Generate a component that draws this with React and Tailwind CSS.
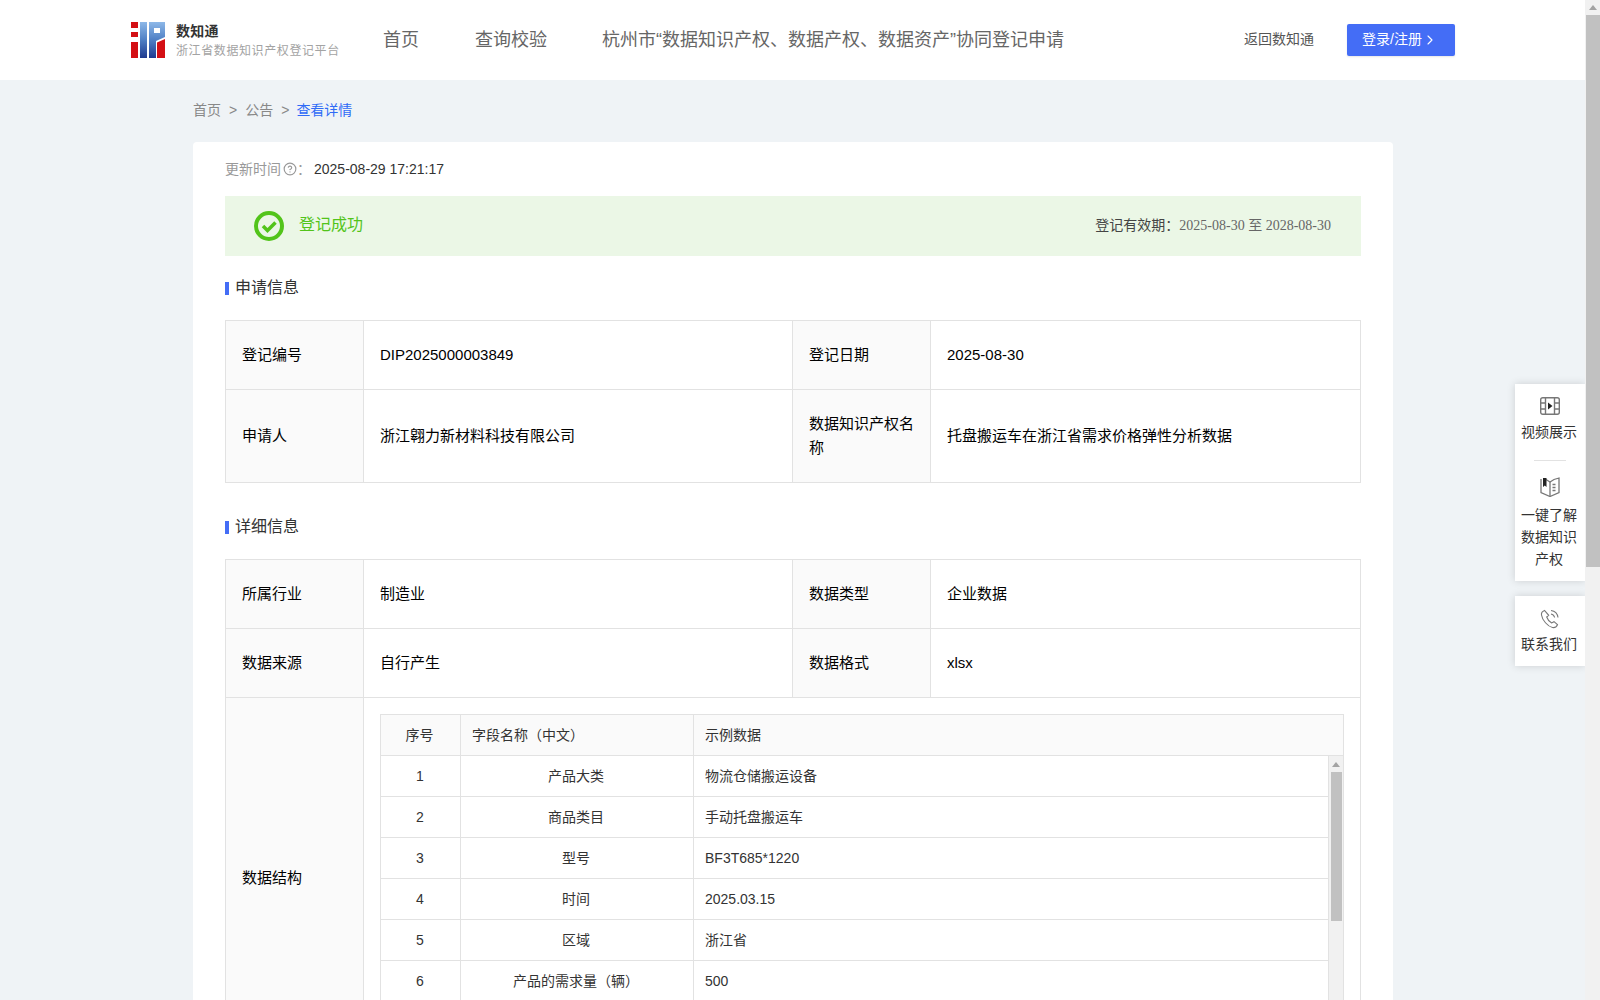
import React from 'react';
import { ChevronRight, CircleHelp } from 'lucide-react';

const FONT = "font-['Liberation_Sans','Noto_Sans_CJK_SC',sans-serif]";

const FIELDS = [
  ['1', '产品大类', '物流仓储搬运设备'],
  ['2', '商品类目', '手动托盘搬运车'],
  ['3', '型号', 'BF3T685*1220'],
  ['4', '时间', '2025.03.15'],
  ['5', '区域', '浙江省'],
  ['6', '产品的需求量（辆）', '500'],
];

// Logo, drawn since there is no image file
const Logo = () => (
  <svg width="34" height="36" viewBox="0 0 34 36" className="shrink-0">
    <defs>
      <linearGradient id="logoBlue" x1="0" y1="0" x2="0" y2="36" gradientUnits="userSpaceOnUse">
        <stop offset="0" stopColor="#8db8e8" />
        <stop offset="0.5" stopColor="#4f7fc4" />
        <stop offset="1" stopColor="#1f3a8f" />
      </linearGradient>
    </defs>
    <rect x="0" y="0" width="7" height="6" fill="#d40f14" />
    <rect x="0" y="10" width="7" height="5" fill="#d40f14" />
    <rect x="0" y="20" width="7" height="16" fill="#d40f14" />
    <rect x="9" y="0" width="7" height="36" fill="url(#logoBlue)" />
    <path d="M18 0h16v15l-9 4v17h-7z" fill="url(#logoBlue)" />
    <rect x="23" y="6" width="6" height="5" fill="#fff" />
    <path d="M26 20.500l8-3.500v19h-8z" fill="#d40f14" />
  </svg>
);

const SectionTitle = ({ children }) => (
  <div className="flex items-center h-[26px]">
    <span className="w-1 h-[13px] mt-[2px] bg-[#446df6]" />
    <span className="ml-[6px] mt-[2px] text-[16px] text-[#333]">{children}</span>
  </div>
);

const Label = ({ children, className = '' }) => (
  <div className={`bg-[#fafafa] px-[16px] pb-px flex items-center text-[15px] leading-[24px] text-black ${className}`}>
    <span>{children}</span>
  </div>
);

const Value = ({ children }) => (
  <div className="px-[16px] flex items-center text-[15px] text-black">{children}</div>
);

// Two-pair row of the info tables
const InfoRow = ({ a, b, c, d, height, last }) => (
  <div
    className={`grid grid-cols-[138px_429px_138px_1fr] divide-x divide-[#e2e2e2] ${last ? '' : 'border-b border-[#e2e2e2]'} ${height}`}
  >
    <Label>{a}</Label>
    <Value>{b}</Value>
    <Label>{c}</Label>
    <Value>{d}</Value>
  </div>
);

const FieldTable = () => (
  <div className="border border-[#e2e2e2] border-b-0 text-[14px] text-[#333]">
    <div className="grid grid-cols-[80px_233px_1fr] h-[41px] bg-[#fafafa] border-b border-[#e2e2e2] divide-x divide-[#e2e2e2]">
      <div className="flex items-center justify-center pr-[2px]">序号</div>
      <div className="flex items-center px-[11px]">字段名称（中文）</div>
      <div className="flex items-center px-[11px]">示例数据</div>
    </div>
    <div className="flex">
      <div className="flex-1 border-r border-[#e2e2e2]">
        {FIELDS.map(([no, name, sample]) => (
          <div
            key={no}
            className="grid grid-cols-[80px_233px_1fr] h-[41px] border-b border-[#e2e2e2] divide-x divide-[#e2e2e2]"
          >
            <div className="flex items-center justify-center pr-[1px]">{no}</div>
            <div className="flex items-center justify-center pr-[2px]">{name}</div>
            <div className="flex items-center px-[11px]">{sample}</div>
          </div>
        ))}
      </div>
      {/* inner scrollbar */}
      <div className="w-[14px] bg-[#f1f1f1]">
        <div className="mx-auto mt-[6px] w-0 h-0 border-x-[4px] border-x-transparent border-b-[5px] border-b-[#a3a3a3]" />
        <div className="ml-[2px] mt-[5px] w-[11px] h-[149px] bg-[#c1c1c1]" />
      </div>
    </div>
  </div>
);

const FilmIcon = () => (
  <svg width="20" height="18" viewBox="0 0 20 18" fill="none" stroke="#777" strokeWidth="1.4">
    <rect x="0.7" y="0.7" width="18.600" height="16.600" rx="2" />
    <path d="M5.500 1v16M14.500 1v16M1 6h4.500M1 12h4.500M14.500 6h4.500M14.500 12h4.500" />
    <path d="M8 5.500l4.500 3.500-4.500 3.500z" fill="#222" stroke="none" />
  </svg>
);

const BookIcon = () => (
  <svg width="20" height="20" viewBox="0 0 20 20" fill="none" stroke="#777" strokeWidth="1.3">
    <path d="M1 2v13.500l9 4 9-4V1l-5 1.500L10 5 6 2.500" />
    <path d="M10 5v14" />
    <path d="M3 1h3.500v9L4.800 8.500 3 10z" fill="#222" stroke="none" />
    <path d="M12.500 7.500h3M12.500 10.500h3M12.500 13.500h3" />
  </svg>
);

const PhoneIcon = () => (
  <svg width="20" height="20" viewBox="0 0 20 20" fill="none" stroke="#777" strokeWidth="1.1">
    <path d="M4.500 1.500c-2 .8-3.400 2.200-3 4.500.7 5 6.200 11.500 11 12.500 2.300.5 4-.8 5-2.800l-3.500-3-2.300 1.300c-2-1-4.200-3.700-5-6l2-1.700z" />
    <path d="M11 1.500c3.500.5 6.500 3.200 7 7M11 5c1.800.4 3.200 1.700 3.600 3.500" />
  </svg>
);

const SideItem = ({ icon, lines, textGap = 'mt-[5px]' }) => (
  <div className="flex flex-col items-center">
    <div className="flex items-center justify-center h-[20px]">{icon}</div>
    <div className={`${textGap} -ml-[2px] text-center text-[14px] leading-[22px] text-[#333] w-[56px]`}>
      {lines.map((l) => (
        <div key={l} className="whitespace-nowrap">{l}</div>
      ))}
    </div>
  </div>
);

const App = () => (
  <div className={`h-screen flex overflow-hidden bg-[#eff3f6] ${FONT}`}>
    <div className="flex-1 min-w-0 relative overflow-hidden">
      {/* Top bar */}
      <header className="h-[80px] bg-white flex items-center pl-[131px] pr-[130px]">
        <Logo />
        <div className="ml-[11px] w-[187px]">
          <div className="text-[14px] font-bold tracking-[0.3px] leading-[20px] text-[#333]">数知通</div>
          <div className="mt-px text-[12px] tracking-[0.6px] leading-[18px] text-[#a3a3a3] whitespace-nowrap">浙江省数据知识产权登记平台</div>
        </div>
        <nav className="ml-[20px] flex items-center gap-[56px] text-[18px] text-[#666] whitespace-nowrap">
          <span>首页</span>
          <span>查询校验</span>
          <span className="-ml-px">杭州市“数据知识产权、数据产权、数据资产”协同登记申请</span>
        </nav>
        <div className="ml-auto flex items-center">
          <span className="pb-px text-[14px] text-[#555]">返回数知通</span>
          <button className="ml-[33px] w-[108px] h-[32px] pb-px pr-[2px] rounded-[2px] bg-[#446df6] shadow-[0_1px_2px_rgba(0,0,0,0.1)] text-white text-[14px] flex items-center justify-center">
            登录/注册
            <ChevronRight size={16} strokeWidth={1.6} />
          </button>
        </div>
      </header>

      <main className="w-[1200px] ml-[193px]">
        {/* Breadcrumb */}
        <div className="h-[62px] pb-[2px] flex items-center text-[14px] text-[#888]">
          <span>首页</span>
          <span className="mx-[8px]">&gt;</span>
          <span>公告</span>
          <span className="ml-[8px] mr-[7px]">&gt;</span>
          <span className="text-[#2f6bf6]">查看详情</span>
        </div>

        <div className="bg-white rounded-[4px] px-[32px] pt-[16px] h-[900px]">
          <div className="flex items-center h-[22px] text-[14px]">
            <span className="text-[#999]">更新时间</span>
            <CircleHelp size={14} strokeWidth={2} className="text-[#999] ml-[2px]" />
            <span className="text-[#999] mr-[3px]">：</span>
            <span className="text-[#333]">2025-08-29 17:21:17</span>
          </div>

          <div className="mt-[16px] h-[60px] bg-[#ebf7e6] flex items-center pl-[29px] pr-[30px]">
            <svg width="30" height="30" viewBox="0 0 30 30" fill="none">
              <circle cx="15" cy="15" r="13" stroke="#52c41a" strokeWidth="4" />
              <path d="M9 15l4.500 4.500L21.500 11.500" stroke="#52c41a" strokeWidth="3.500" />
            </svg>
            <span className="ml-[15px] pb-[2px] text-[16px] text-[#52c41a]">登记成功</span>
            <span className="ml-auto pb-[2px] text-[14px] text-[#444]">登记有效期：</span>
            <span className="pb-[2px] text-[14px] text-[#666] font-['Liberation_Serif','Noto_Sans_CJK_SC',serif]">2025-08-30 至 2028-08-30</span>
          </div>

          <div className="mt-[18px]"><SectionTitle>申请信息</SectionTitle></div>

          <div className="mt-[20px] border border-[#e2e2e2]">
            <InfoRow a="登记编号" b="DIP2025000003849" c="登记日期" d="2025-08-30" height="h-[69px]" />
            <InfoRow
              a="申请人"
              b="浙江翱力新材料科技有限公司"
              c="数据知识产权名称"
              d="托盘搬运车在浙江省需求价格弹性分析数据"
              height="h-[92px]"
              last
            />
          </div>

          <div className="mt-[30px]"><SectionTitle>详细信息</SectionTitle></div>

          <div className="mt-[20px] border border-[#e2e2e2]">
            <InfoRow a="所属行业" b="制造业" c="数据类型" d="企业数据" height="h-[69px]" />
            <InfoRow a="数据来源" b="自行产生" c="数据格式" d="xlsx" height="h-[69px]" />
            <div className="grid grid-cols-[138px_1fr] h-[361px] divide-x divide-[#e2e2e2]">
              <Label>数据结构</Label>
              <div className="p-[16px]"><FieldTable /></div>
            </div>
          </div>
        </div>
      </main>

      {/* Floating side tools */}
      <div className="absolute right-0 top-[384px] w-[70px] flex flex-col gap-[15px]">
        <div className="bg-white shadow-[0_0_8px_rgba(0,0,0,0.15)] pt-[12px] h-[197px]">
          <SideItem icon={<FilmIcon />} lines={['视频展示']} />
          <div className="mx-auto mt-[17px] mb-[16px] w-[32px] h-px bg-[#e2e2e2]" />
          <SideItem icon={<BookIcon />} lines={['一键了解', '数据知识', '产权']} textGap="mt-[7px]" />
        </div>
        <div className="bg-white shadow-[0_0_8px_rgba(0,0,0,0.15)] pt-[13px] h-[70px]">
          <SideItem icon={<PhoneIcon />} lines={['联系我们']} textGap="mt-[4px]" />
        </div>
      </div>
    </div>

    {/* Page scrollbar */}
    <div className="w-[15px] shrink-0 bg-[#f1f1f1]">
      <div className="mx-auto mt-[5px] w-0 h-0 border-x-[4px] border-x-transparent border-b-[5px] border-b-[#a3a3a3]" />
      <div className="mt-[5px] ml-[1px] w-[14px] h-[552px] bg-[#c1c1c1]" />
    </div>
  </div>
);

export default App;
